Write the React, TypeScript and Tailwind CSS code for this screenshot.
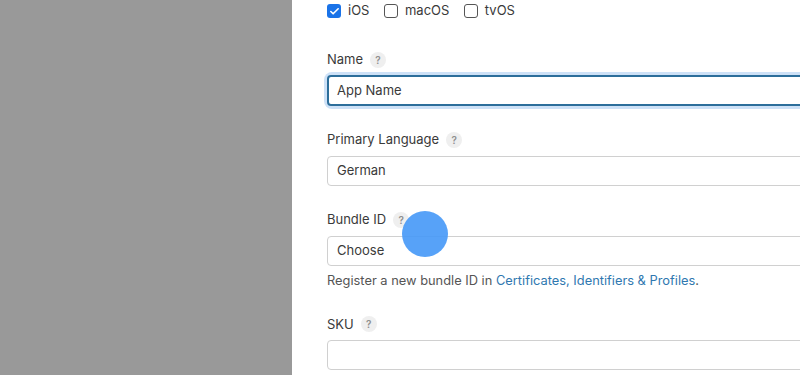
import { Check } from "lucide-react";

function Help() {
  return (
    <span className="ml-[7px] inline-flex h-[16px] w-[16px] items-center justify-center rounded-full bg-[#efefef] text-[10px] font-semibold text-[#8e8e8e]">
      ?
    </span>
  );
}

function Label({ text }: { text: string }) {
  return (
    <div className="flex h-[18px] items-center text-[13px] text-[#3a3a3a]">
      {text}
      <Help />
    </div>
  );
}

function Box({ checked, label }: { checked?: boolean; label: string }) {
  return (
    <div className="flex items-center gap-[7px]">
      {checked ? (
        <span className="flex h-[14px] w-[14px] items-center justify-center rounded-[3px] bg-[#1a73e8]">
          <Check className="h-[11px] w-[11px] text-white" strokeWidth={3.5} />
        </span>
      ) : (
        <span className="h-[14px] w-[14px] rounded-[3px] border border-[#555] bg-white" />
      )}
      <span className="text-[13px] text-[#3a3a3a]">{label}</span>
    </div>
  );
}

export default function App() {
  return (
    <div
      className="flex h-[375px] w-[800px] overflow-hidden bg-white"
      style={{ fontFamily: "Inter, 'Noto Sans', sans-serif" }}
    >
      <div className="w-[292px] shrink-0 bg-[#999999]" />
      <div className="relative flex-1 pl-[35px]">
        <div className="flex h-[21px] items-center gap-[14.5px] pt-[1px]">
          <Box checked label="iOS" />
          <Box label="macOS" />
          <Box label="tvOS" />
        </div>

        <div className="mt-[30px]">
          <Label text="Name" />
          <div className="mt-[6px] w-[560px] rounded-[5px] shadow-[0_0_0_3px_#cde1f7]">
            <div className="flex h-[31px] items-center rounded-[4px] border-2 border-[#2c6e9b] bg-white px-[8px] text-[13px] text-[#3a3a3a]">
              App Name
            </div>
          </div>
        </div>

        <div className="mt-[25px]">
          <Label text="Primary Language" />
          <div className="mt-[7px] flex h-[30px] w-[560px] items-center rounded-[4px] border border-[#d0d0d0] px-[9px] text-[13px] text-[#3a3a3a]">
            German
          </div>
        </div>

        <div className="mt-[25px]">
          <Label text="Bundle ID" />
          <div className="mt-[7px] flex h-[30px] w-[560px] items-center rounded-[4px] border border-[#d0d0d0] px-[9px] text-[13px] text-[#3a3a3a]">
            Choose
          </div>
          <p className="mt-[5px] text-[12.85px] text-[#555]">
            Register a new bundle ID in{" "}
            <span className="text-[#2f78b0]">Certificates, Identifiers &amp; Profiles</span>.
          </p>
        </div>

        <div className="mt-[25px]">
          <Label text="SKU" />
          <div className="mt-[7px] h-[30px] w-[560px] rounded-[4px] border border-[#d0d0d0]" />
        </div>

        <div className="absolute left-[110px] top-[211px] h-[46px] w-[46px] rounded-full bg-[#4598f7]/90" />
      </div>
    </div>
  );
}
